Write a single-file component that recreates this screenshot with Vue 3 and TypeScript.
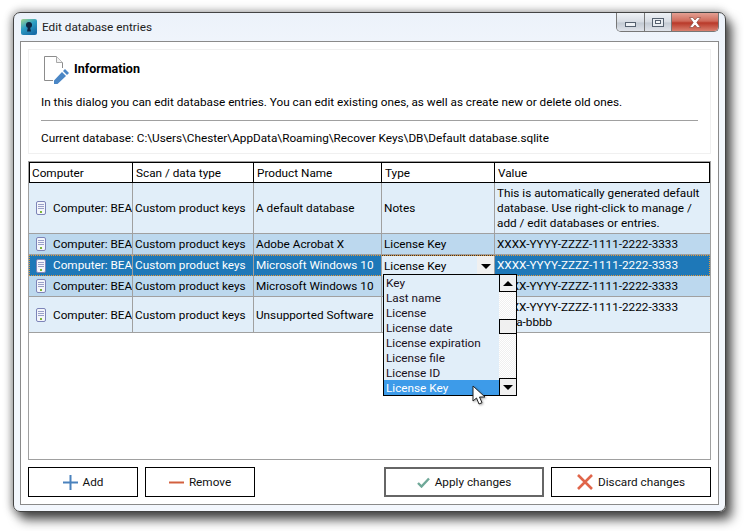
<script setup lang="ts">
const headers = ['Computer', 'Scan / data type', 'Product Name', 'Type', 'Value']

const rows = [
  { product: 'A default database', type: 'Notes', value: 'This is automatically generated default database. Use right-click to manage / add / edit databases or entries.', kind: 'tall' },
  { product: 'Adobe Acrobat X', type: 'License Key', value: 'XXXX-YYYY-ZZZZ-1111-2222-3333', kind: 'alt' },
  { product: 'Microsoft Windows 10', type: 'License Key', value: 'XXXX-YYYY-ZZZZ-1111-2222-3333', kind: 'selected' },
  { product: 'Microsoft Windows 10', type: 'License Key', value: 'XXXX-YYYY-ZZZZ-1111-2222-3333', kind: 'alt' },
  { product: 'Unsupported Software', type: 'License Key', value: 'XXXX-YYYY-ZZZZ-1111-2222-3333\naaaa-bbbb', kind: 'mid' },
]

const options = ['Key', 'Last name', 'License', 'License date', 'License expiration', 'License file', 'License ID', 'License Key']
</script>

<template>
  <div class="desktop">
    <div class="window">
      <div class="titlebar">
        <svg class="app-icon" width="16" height="16" viewBox="0 0 16 16">
          <defs>
            <linearGradient id="appbg" x1="0" y1="0" x2="0.6" y2="1">
              <stop offset="0" stop-color="#a5d78c" />
              <stop offset="0.5" stop-color="#2f9fc4" />
              <stop offset="1" stop-color="#1a6fa8" />
            </linearGradient>
          </defs>
          <rect width="16" height="16" rx="2" fill="url(#appbg)" />
          <circle cx="8" cy="6" r="3" fill="#10253f" />
          <path d="M7 8h2l1 4.500H6z" fill="#10253f" />
        </svg>
        <span class="title">Edit database entries</span>
        <div class="controls">
          <div class="ctl ctl-min">
            <svg width="11" height="5" viewBox="0 0 11 5"><rect x="0.500" y="0.500" width="10" height="4" fill="#eef1f5" stroke="#55606e" /></svg>
          </div>
          <div class="ctl ctl-max">
            <svg width="12" height="9" viewBox="0 0 12 9">
              <rect x="0.500" y="0.500" width="11" height="8" fill="#e8ecf1" stroke="#55606e" />
              <rect x="3.500" y="2.500" width="5" height="3" fill="#f4f6f8" stroke="#55606e" />
            </svg>
          </div>
          <div class="ctl ctl-close">
            <svg width="14" height="11" viewBox="0 0 14 11">
              <path d="M1.500 0.500h3.300L7 3l2.200-2.500h3.300L8.800 5.500l3.700 5H9.200L7 8l-2.200 2.500H1.500l3.700-5z" fill="#fff" stroke="#8a4a40" stroke-width="0.700" />
            </svg>
          </div>
        </div>
      </div>

      <div class="client">
        <div class="info">
          <div class="info-head">
            <svg class="info-icon" width="25" height="28" viewBox="0 0 25 28">
              <path d="M9 24.500H0.500V0.500h12l6 6V12" fill="#fff" stroke="#8c8c8c" />
              <path d="M12.500 0.500v6h6" fill="#f2f2f2" stroke="#a8a8a8" />
              <path d="M21 13l4 4-2 2-4-4zM18 16l4 4-8.500 8H10v-3.500z" fill="#4a86c5" />
            </svg>
            <b class="info-title">Information</b>
          </div>
          <p class="info-text">In this dialog you can edit database entries. You can edit existing ones, as well as create new or delete old ones.</p>
          <div class="info-rule"></div>
          <p class="info-db">Current database: C:\Users\Chester\AppData\Roaming\Recover Keys\DB\Default database.sqlite</p>
        </div>

        <div class="table-wrap">
          <div class="grid-row head">
            <div v-for="h in headers" :key="h" class="hcell">{{ h }}</div>
          </div>
          <div v-for="(row, i) in rows" :key="i" class="grid-row body-row" :class="'row-' + row.kind">
            <div class="cell cell-computer">
              <svg class="doc" width="10" height="14" viewBox="0 0 10 14">
                <rect x="0.500" y="0.500" width="9" height="13" rx="1.500" fill="#f4f6fb" stroke="#7d84b8" />
                <path d="M2 3.500h6M2 5.500h6M2 7.500h6" stroke="#9aa0c8" />
                <rect x="4" y="10" width="2" height="2" fill="#7fb53c" />
              </svg>
              <span class="computer-text">Computer: BEAST</span>
            </div>
            <div class="cell">Custom product keys</div>
            <div class="cell">{{ row.product }}</div>
            <div v-if="row.kind === 'selected'" class="cell cell-editor">
              <span>{{ row.type }}</span>
              <span class="combo-btn"><i class="tri tri-down"></i></span>
            </div>
            <div v-else class="cell">{{ row.type }}</div>
            <div class="cell cell-value">{{ row.value }}</div>
          </div>

          <div class="popup">
            <div class="popup-list">
              <div v-for="o in options" :key="o" class="popup-item" :class="{ active: o === 'License Key' }">{{ o }}</div>
            </div>
            <div class="scroll">
              <div class="sb-btn sb-up"><i class="tri tri-up"></i></div>
              <div class="sb-track sb-track-top"></div>
              <div class="sb-thumb"></div>
              <div class="sb-track sb-track-bottom"></div>
              <div class="sb-btn sb-down"><i class="tri tri-down"></i></div>
            </div>
          </div>

          <svg class="cursor" width="16" height="22" viewBox="0 0 16 22">
            <path d="M1 1v15l3.500-3 2.500 6 3-1.300-2.500-5.700H13z" fill="#fff" stroke="#222" stroke-width="1" />
          </svg>
        </div>

        <div class="buttons">
          <button class="btn btn-small">
            <svg width="15" height="15" viewBox="0 0 15 15"><path d="M7.500 0v15M0 7.500h15" stroke="#4a82bd" stroke-width="2" /></svg>
            Add
          </button>
          <button class="btn btn-small">
            <svg width="15" height="15" viewBox="0 0 15 15"><path d="M0 7.500h15" stroke="#d2603f" stroke-width="2" /></svg>
            Remove
          </button>
          <span class="spacer"></span>
          <button class="btn btn-wide btn-default">
            <svg width="13" height="11" viewBox="0 0 13 11"><path d="M1 6l3.500 3.500L12 1.500" fill="none" stroke="#6fa898" stroke-width="2.400" /></svg>
            Apply changes
          </button>
          <button class="btn btn-wide">
            <svg width="16" height="16" viewBox="0 0 16 16"><path d="M1 1l14 14M15 1L1 15" stroke="#e0654a" stroke-width="2.600" /></svg>
            Discard changes
          </button>
        </div>
      </div>
    </div>
  </div>
</template>

<style>
html, body {
  margin: 0;
  background: #fff;
  overflow: hidden;
}
</style>

<style scoped>
.desktop {
  width: 744px;
  height: 531px;
  padding: 12px 0 0 13px;
  box-sizing: border-box;
  font-family: Roboto, "Open Sans", sans-serif;
  font-size: 11.75px;
  color: #000;
}

.window {
  width: 713px;
  height: 500px;
  box-sizing: border-box;
  border: 1px solid #444;
  border-radius: 7px;
  padding: 0 6px 6px;
  background: linear-gradient(#ecf2fa, #f3f7fd 60px);
  box-shadow: 6px 8px 11px rgba(0, 0, 0, 0.65), 0 -2px 8px rgba(0, 0, 0, 0.22), -2px 2px 8px rgba(0, 0, 0, 0.25);
  display: flex;
  flex-direction: column;
}

.titlebar {
  height: 28px;
  flex: none;
  display: flex;
  align-items: center;
  position: relative;
  padding-left: 1px;
}

.title {
  margin-left: 5px;
  color: #222;
}

.controls {
  position: absolute;
  top: 0;
  right: 0;
  display: flex;
  height: 19px;
  box-sizing: border-box;
  border: 1px solid #777;
  border-top: none;
  border-radius: 0 0 5px 5px;
  overflow: hidden;
}

.ctl {
  display: flex;
  align-items: center;
  justify-content: center;
  box-sizing: border-box;
  background: linear-gradient(#eff2f6, #d7dce3 50%, #c3cad3 55%, #dfe3ea);
}

.ctl-min {
  width: 28px;
  padding-top: 5px;
  border-right: 1px solid #777;
}

.ctl-max {
  width: 27px;
  border-right: 1px solid #777;
}

.ctl-close {
  width: 46px;
  background: linear-gradient(#e3a093, #cf6a5a 45%, #b93a2a 55%, #d9806f);
}

.client {
  flex: 1;
  min-height: 0;
  border: 1px solid #8a8a8a;
  background: #fff;
  padding: 7px;
  display: flex;
  flex-direction: column;
}

.info {
  height: 105px;
  flex: none;
  box-sizing: border-box;
  border: 1px solid #f0f0f0;
  padding: 6px 12px 0 12px;
}

.info-head {
  display: flex;
  height: 28px;
}

.info-icon {
  margin-left: 3px;
}

.info-title {
  margin-left: 5px;
  font-size: 12.5px;
  line-height: 25px;
}

.info-text {
  margin: 10px 0 0;
  line-height: 16px;
}

.info-rule {
  height: 1px;
  background: #a0a0a0;
  margin-top: 10px;
}

.info-db {
  margin: 9px 0 0;
  line-height: 16px;
}

.table-wrap {
  position: relative;
  height: 299px;
  flex: none;
  box-sizing: border-box;
  margin-top: 7px;
  border: 1px solid #a0a0a0;
  background: #fff;
}

.grid-row {
  display: grid;
  grid-template-columns: 104px 121px 128px 113px 215px;
}

.head {
  height: 21px;
  box-sizing: border-box;
  outline: 1px solid #000;
  outline-offset: -1px;
}

.hcell {
  padding-left: 3px;
  line-height: 22px;
  border-right: 1px solid #000;
}

.hcell:last-child {
  border-right: none;
}

.body-row {
  box-sizing: border-box;
  border-bottom: 1px solid #a0a0a0;
  background: #e1eef9;
}

.row-tall {
  height: 51px;
}

.row-alt {
  height: 21px;
  background: #bcd8ee;
}

.row-selected {
  height: 21px;
  background: #1e78b8;
  color: #fff;
  border-bottom: none;
  outline: 1px dotted #e59a3c;
  outline-offset: -1px;
}

.row-mid {
  height: 36px;
}

.cell {
  display: flex;
  align-items: center;
  padding-left: 2px;
  border-right: 1px solid #a0a0a0;
  overflow: hidden;
  white-space: nowrap;
  line-height: 15px;
}

.cell-computer {
  padding-left: 7px;
}

.doc {
  flex: none;
}

.computer-text {
  margin-left: 7px;
  white-space: nowrap;
}

.cell-value {
  white-space: pre-line;
  border-right: none;
  padding-top: 1px;
}

.cell-computer .computer-text,
.body-row .cell:not(.cell-computer):not(.cell-value) {
  padding-top: 1px;
}

.row-selected .cell-value,
.row-selected .computer-text,
.row-selected .cell:not(.cell-computer):not(.cell-value) {
  padding-top: 0;
}

.cell-editor {
  background: #e1eef9;
  color: #000;
  justify-content: space-between;
  padding-right: 0;
  border-top: 1px dotted #333;
}

.combo-btn {
  width: 17px;
  height: 100%;
  background: #f0f0f0;
  display: flex;
  align-items: center;
  justify-content: center;
}

.tri {
  display: block;
  width: 0;
  height: 0;
  border-left: 5px solid transparent;
  border-right: 5px solid transparent;
}

.tri-down {
  border-top: 5px solid #000;
}

.tri-up {
  border-bottom: 5px solid #000;
}

.popup {
  position: absolute;
  left: 354px;
  top: 112px;
  width: 134px;
  height: 122px;
  box-sizing: border-box;
  border: 1px solid #000;
  background: #e1eef9;
  display: flex;
}

.popup-list {
  flex: 1;
}

.popup-item {
  height: 15px;
  line-height: 17px;
  padding-left: 2px;
  color: #1a0f20;
}

.popup-item.active {
  background: #3d9be9;
  color: #fff;
}

.scroll {
  width: 17px;
  flex: none;
  display: flex;
  flex-direction: column;
  background: repeating-conic-gradient(#f0f0f0 0 25%, #fff 0 50%) 0 0 / 2px 2px;
}

.sb-btn {
  height: 17px;
  box-sizing: border-box;
  border: 0 solid #000;
  background: #f0f0f0;
  display: flex;
  align-items: center;
  justify-content: center;
}

.sb-up {
  border-width: 0 0 1px 1px;
}

.sb-down {
  border-width: 1px 0 0 1px;
}

.sb-track-top {
  height: 27px;
}

.sb-thumb {
  height: 15px;
  box-sizing: border-box;
  border: 1px solid #000;
  border-right: none;
  background: #f0f0f0;
}

.sb-track-bottom {
  flex: 1;
}

.cursor {
  position: absolute;
  left: 443px;
  top: 223px;
  filter: drop-shadow(1px 1px 1px rgba(0, 0, 0, 0.35));
}

.buttons {
  display: flex;
  gap: 7px;
  margin-top: 7px;
}

.spacer {
  flex: 1;
}

.btn {
  height: 30px;
  box-sizing: border-box;
  border: 1px solid #000;
  background: #fff;
  font: inherit;
  padding: 0;
  display: flex;
  align-items: center;
  justify-content: center;
  gap: 5px;
  color: #111;
}

.btn-small {
  width: 110px;
}

.btn-wide {
  width: 160px;
}

.btn-default {
  border: 2px solid #666;
}
</style>
